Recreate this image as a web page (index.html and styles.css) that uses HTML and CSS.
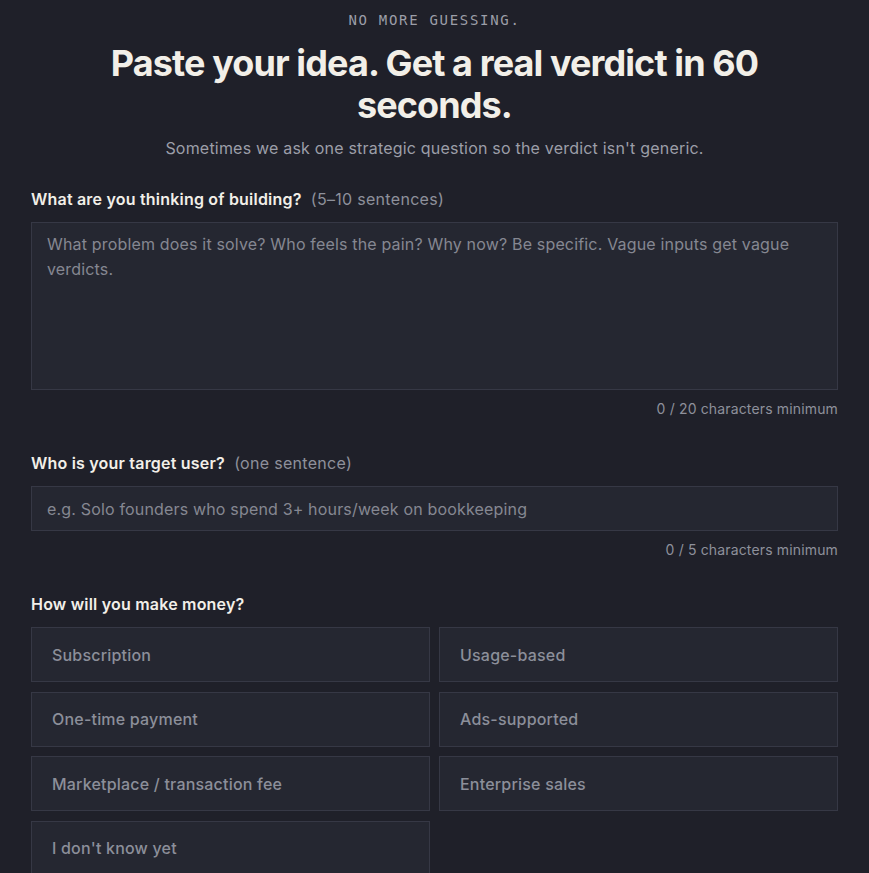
FILE: index.html
```html
<!DOCTYPE html>
<html lang="en">
<head>
    <meta charset="UTF-8">
    <meta name="viewport" content="width=device-width, initial-scale=1.0">
    <title>Idea Verdict</title>
    <link rel="stylesheet" href="styles.css">
</head>
<body>
    <div id="page">
        <p class="eyebrow">NO MORE GUESSING.</p>
        <h1>Paste your idea. Get a real verdict in 60 seconds.</h1>
        <p class="subtitle">Sometimes we ask one strategic question so the verdict isn't generic.</p>

        <div class="field">
            <label class="field-label" for="idea">What are you thinking of building? <span class="hint">(5–10 sentences)</span></label>
            <textarea id="idea" placeholder="What problem does it solve? Who feels the pain? Why now? Be specific. Vague inputs get vague verdicts."></textarea>
            <div class="counter">0 / 20 characters minimum</div>
        </div>

        <div class="field">
            <label class="field-label" for="target">Who is your target user? <span class="hint">(one sentence)</span></label>
            <input id="target" type="text" placeholder="e.g. Solo founders who spend 3+ hours/week on bookkeeping">
            <div class="counter">0 / 5 characters minimum</div>
        </div>

        <div class="field">
            <div class="field-label">How will you make money?</div>
            <div class="options">
                <button class="option">Subscription</button>
                <button class="option">Usage-based</button>
                <button class="option">One-time payment</button>
                <button class="option">Ads-supported</button>
                <button class="option">Marketplace / transaction fee</button>
                <button class="option">Enterprise sales</button>
                <button class="option">I don't know yet</button>
            </div>
        </div>
    </div>
</body>
</html>
```

FILE: styles.css
```css
body {
    font-family: Inter, "Noto Sans", sans-serif;
    background-color: #1f2029;
    color: #f2efe8;
    margin: 0;
    padding: 0;
}

#page {
    max-width: 807px;
    margin: 0 auto;
    padding: 12px 0 40px;
}

.eyebrow {
    font-family: "DejaVu Sans Mono", "Liberation Mono", monospace;
    font-size: 14px;
    letter-spacing: 1.7px;
    color: #9c9ea8;
    text-align: center;
    margin: 0;
    line-height: 16px;
}

h1 {
    font-size: 36px;
    font-weight: 700;
    letter-spacing: -0.9px;
    line-height: 42px;
    text-align: center;
    margin: 14px 60px 0;
    color: #f2efe8;
}

.subtitle {
    font-size: 16px;
    letter-spacing: 0.2px;
    color: #9c9ea8;
    text-align: center;
    margin: 12px 0 31px;
    line-height: 20px;
}

.field + .field {
    margin-top: 36px;
}

.field-label {
    display: block;
    font-size: 16px;
    font-weight: 600;
    letter-spacing: 0.2px;
    line-height: 20px;
    color: #f2efe8;
    margin-bottom: 13px;
}

.hint {
    font-weight: 400;
    letter-spacing: 0.3px;
    color: #8e909b;
    margin-left: 5px;
}

textarea,
input {
    display: block;
    box-sizing: border-box;
    width: 100%;
    background-color: #252731;
    border: 1px solid #363845;
    border-radius: 0;
    color: #f2efe8;
    font-family: Inter, "Noto Sans", sans-serif;
    font-size: 16px;
    letter-spacing: 0.17px;
    outline: none;
}

textarea {
    height: 168px;
    padding: 9px 15px;
    line-height: 25px;
    resize: none;
}

input {
    height: 45px;
    padding: 0 15px;
}

textarea::placeholder,
input::placeholder {
    color: #858792;
}

.counter {
    font-size: 14px;
    letter-spacing: 0.15px;
    color: #8e909b;
    text-align: right;
    margin-top: 11px;
    line-height: 16px;
}

.options {
    display: grid;
    grid-template-columns: 1fr 1fr;
    column-gap: 9px;
    row-gap: 9.5px;
}

.option {
    height: 55px;
    padding: 0 20px;
    text-align: left;
    font-family: Inter, "Noto Sans", sans-serif;
    font-size: 16px;
    font-weight: 500;
    letter-spacing: 0.2px;
    color: #8c8f9a;
    background-color: #252731;
    border: 1px solid #363845;
    border-radius: 0;
    cursor: pointer;
}

.option:hover {
    border-color: #4a4c5a;
}
```
